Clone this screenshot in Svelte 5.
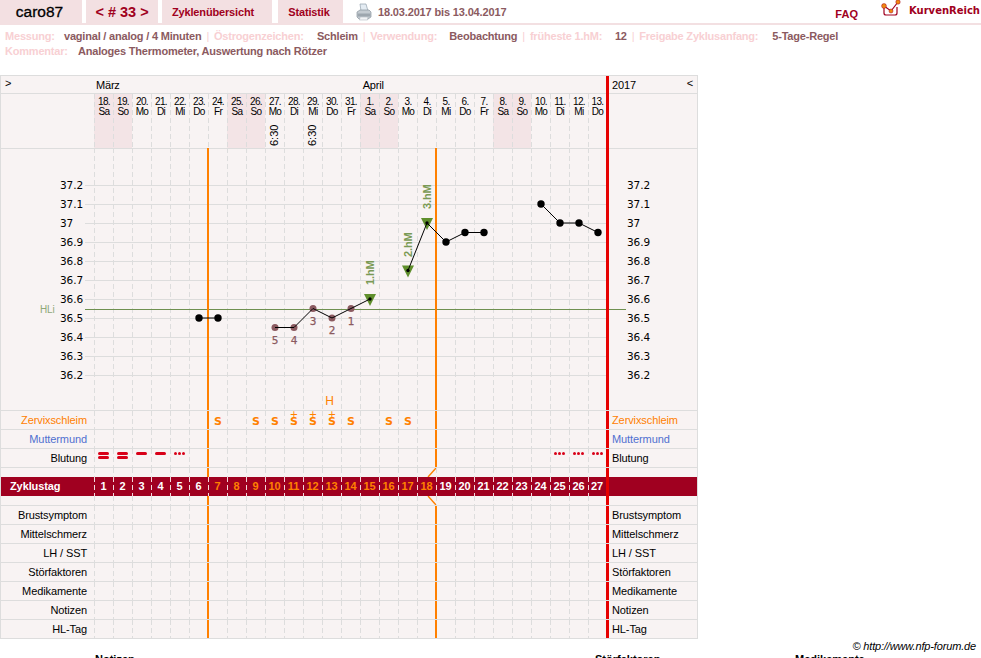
<script>
  const days = [
    ['18.', 'Sa'], ['19.', 'So'], ['20.', 'Mo'], ['21.', 'Di'], ['22.', 'Mi'], ['23.', 'Do'], ['24.', 'Fr'],
    ['25.', 'Sa'], ['26.', 'So'], ['27.', 'Mo'], ['28.', 'Di'], ['29.', 'Mi'], ['30.', 'Do'], ['31.', 'Fr'],
    ['1.', 'Sa'], ['2.', 'So'], ['3.', 'Mo'], ['4.', 'Di'], ['5.', 'Mi'], ['6.', 'Do'], ['7.', 'Fr'],
    ['8.', 'Sa'], ['9.', 'So'], ['10.', 'Mo'], ['11.', 'Di'], ['12.', 'Mi'], ['13.', 'Do']
  ];
  const idx = days.map((_, i) => i);
  const cx = i => 104 + 19 * i;
  const ty = t => 185 + (37.2 - t) * 190 - 148;
  const scale = [37.2, 37.1, 37, 36.9, 36.8, 36.7, 36.6, 36.5, 36.4, 36.3, 36.2];
  const times = { 9: '6:30', 11: '6:30' };

  // temperature runs, a gap in the data starts a new line
  const runs = [
    [[5, 36.5], [6, 36.5]],
    [[9, 36.45], [10, 36.45], [11, 36.55], [12, 36.5], [13, 36.55], [14, 36.6]],
    [[16, 36.75], [17, 37], [18, 36.9], [19, 36.95], [20, 36.95]],
    [[23, 37.1], [24, 37], [25, 37], [26, 36.95]]
  ];
  const low = { 9: '5', 10: '4', 11: '3', 12: '2', 13: '1' };
  const high = { 14: '1.hM', 16: '2.hM', 17: '3.hM' };
  const labelTop = { 14: 285, 16: 257, 17: 209 };

  const schleim = { 6: 'S', 8: 'S', 9: 'S', 10: 'Ŝ', 11: 'Ŝ', 12: 'Ŝ', 13: 'S', 15: 'S', 16: 'S' };
  const blutung = { 0: 'stark', 1: 'stark', 2: 'mittel', 3: 'mittel', 4: 'wenig', 24: 'wenig', 25: 'wenig', 26: 'wenig' };
  const lowerRows = ['Brustsymptom', 'Mittelschmerz', 'LH / SST', 'Störfaktoren', 'Medikamente', 'Notizen', 'HL-Tag'];

  const isWeekend = d => d[1] === 'Sa' || d[1] === 'So';
  const isOrange = i => i === 6 || i === 18;
</script>

<header class="top">
  <div class="tab name">caro87</div>
  <div class="tab num">&lt; # 33 &gt;</div>
  <div class="tab link wide">Zyklenübersicht</div>
  <div class="tab link stat">Statistik</div>
  <svg class="printer" width="16" height="18" viewBox="0 0 16 18">
    <path d="M4 1 L10 1 L12 8 L5 8 Z" fill="#e4ecf3" stroke="#93a2ae" stroke-width=".7" />
    <path d="M1 9 L4 7 L13 7 L15 9 L15 14 L12 16 L3 16 L1 14 Z" fill="#c4cbd1" stroke="#8b959d" stroke-width=".7" />
    <path d="M1.5 10.5 L14.5 10.5 L14.5 13.5 L1.5 13.5 Z" fill="#9da6ae" />
    <path d="M4 14 L12 14 L11.5 17 L3.5 17 Z" fill="#f2f4f6" stroke="#a5adb4" stroke-width=".5" />
  </svg>
  <div class="range">18.03.2017 bis 13.04.2017</div>
  <div class="faq">FAQ</div>
  <svg class="logo" width="20" height="18" viewBox="0 0 20 18">
    <path d="M3 6 L3 13 Q3 15 5 15 L14 15 Q16 15 16 13 L16 7" fill="#fff" stroke="#a00020" stroke-width="1.2" />
    <path d="M3 6 L10 11 L17 2" fill="none" stroke="#a00020" stroke-width="1.2" />
    <circle cx="3" cy="6" r="2.4" fill="#f08a10" stroke="#a00020" stroke-width=".5" />
    <circle cx="10" cy="11" r="2" fill="#f08a10" stroke="#a00020" stroke-width=".5" />
    <circle cx="17" cy="2" r="2.2" fill="#f08a10" stroke="#a00020" stroke-width=".5" />
  </svg>
  <div class="brand">KurvenReich</div>
</header>

<section class="meta">
  <div class="meta-line">
    <span class="key k1">Messung:</span><span class="val v1">vaginal / analog / 4 Minuten</span><span class="sep">|</span>
    <span class="key k2">Östrogenzeichen:</span><span class="val v2">Schleim</span><span class="sep">|</span>
    <span class="key k3">Verwendung:</span><span class="val v3">Beobachtung</span><span class="sep">|</span>
    <span class="key k4">früheste 1.hM:</span><span class="val v4">12</span><span class="sep">|</span>
    <span class="key k5">Freigabe Zyklusanfang:</span><span class="val">5-Tage-Regel</span>
  </div>
  <div class="meta-line">
    <span class="key k6">Kommentar:</span><span class="val">Analoges Thermometer, Auswertung nach Rötzer</span>
  </div>
</section>

<main class="chart">
  <div class="row months">
    <div class="toggle">&gt;</div>
    <div class="month-names">
      <span class="m1">März</span>
      <span class="m2">April</span>
    </div>
    <div class="redbar"></div>
    <div class="side year"><span>2017</span><span class="back">&lt;</span></div>
  </div>

  <div class="row dayrow">
    <div class="label"></div>
    {#each days as d, i}
      <div class="cell day" class:we={isWeekend(d)}>
        <div class="d">{d[0]}</div>
        <div class="d">{d[1]}</div>
        {#if times[i]}<div class="time">{times[i]}</div>{/if}
      </div>
    {/each}
    <div class="redbar"></div>
    <div class="side"></div>
  </div>

  <svg class="plot" width="696" height="262" viewBox="1 0 696 262">
    {#each idx as i}
      <line x1={94.5 + 19 * i} x2={94.5 + 19 * i} y1="0" y2="262" class="dash" />
    {/each}
    {#each scale as t}
      <line x1="85" x2="606" y1={ty(t) + 0.5} y2={ty(t) + 0.5} class="grid" />
      <text x="60" y={ty(t) + 4} class="scale">{t}</text>
      <text x="627" y={ty(t) + 4} class="scale">{t}</text>
    {/each}
    <line x1="85" x2="626" y1="161.5" y2="161.5" class="hl" />
    <text x="40" y="165" class="hli">HLi</text>
    <rect x="207" y="0" width="2" height="262" fill="#ff8000" />
    <rect x="435" y="0" width="2" height="262" fill="#ff8000" />
    <rect x="606" y="0" width="3" height="262" fill="#e60000" />

    {#each runs as run}
      {#each run as [i, t]}
        {#if high[i]}
          <path d={`M${cx(i) - 6} ${ty(t) - 5} L${cx(i) + 6} ${ty(t) - 5} L${cx(i)} ${ty(t) + 7} Z`} fill="#5f8f2c" />
          <circle cx={cx(i)} cy={ty(t)} r="1.7" fill="#000" />
          <text class="hm" transform={`translate(${cx(i) + 4} ${labelTop[i] - 148}) rotate(-90)`}>{high[i]}</text>
        {:else if low[i]}
          <circle cx={cx(i)} cy={ty(t)} r="3.5" fill="#8b5a60" />
          <text class="low" x={cx(i)} y={ty(t) + (i === 9 || i === 10 || i === 12 ? 16 : 16)}>{low[i]}</text>
        {:else}
          <circle cx={cx(i)} cy={ty(t)} r="3.7" fill="#000" />
        {/if}
      {/each}
      <polyline points={run.map(([i, t]) => `${cx(i)},${ty(t)}`).join(' ')} class="curve" />
    {/each}
    <text x="329.5" y="257" class="h">H</text>
  </svg>

  <div class="row line">
    <div class="label zervix">Zervixschleim</div>
    {#each idx as i}
      <div class="cell" class:ov={isOrange(i)}>
        {#if schleim[i]}
          <span class="s" class:plus={schleim[i] === 'Ŝ'}>S</span>
        {/if}
      </div>
    {/each}
    <div class="redbar"></div>
    <div class="side zervix">Zervixschleim</div>
  </div>

  <div class="row line">
    <div class="label mund">Muttermund</div>
    {#each idx as i}<div class="cell" class:ov={isOrange(i)}></div>{/each}
    <div class="redbar"></div>
    <div class="side mund">Muttermund</div>
  </div>

  <div class="row line">
    <div class="label">Blutung</div>
    {#each idx as i}
      <div class="cell" class:ov={isOrange(i)}>
        {#if blutung[i] === 'stark'}
          <span class="bleed"></span><span class="bleed second"></span>
        {:else if blutung[i] === 'mittel'}
          <span class="bleed"></span>
        {:else if blutung[i] === 'wenig'}
          <span class="spots"><i></i><i></i><i></i></span>
        {/if}
      </div>
    {/each}
    <div class="redbar"></div>
    <div class="side">Blutung</div>
  </div>

  <div class="row gap top-gap">
    <div class="label"></div>
    {#each idx as i}
      <div class="cell" class:ov={i === 6}>
        {#if i === 17}
          <svg class="kink" width="10" height="9" viewBox="0 0 10 9"><line x1="9" y1="0" x2="1" y2="9" /></svg>
        {/if}
      </div>
    {/each}
    <div class="redbar"></div>
    <div class="side"></div>
  </div>

  <div class="row band">
    <div class="label">Zyklustag</div>
    {#each idx as i}
      <div class="cell" class:hot={i >= 6 && i <= 17}>{i + 1}</div>
    {/each}
    <div class="redbar"></div>
    <div class="side"></div>
  </div>

  <div class="row gap bottom-gap">
    <div class="label"></div>
    {#each idx as i}
      <div class="cell" class:ov={i === 6}>
        {#if i === 17}
          <svg class="kink" width="10" height="9" viewBox="0 0 10 9"><line x1="1" y1="0" x2="9" y2="9" /></svg>
        {/if}
      </div>
    {/each}
    <div class="redbar"></div>
    <div class="side"></div>
  </div>

  {#each lowerRows as name}
    <div class="row line">
      <div class="label">{name}</div>
      {#each idx as i}<div class="cell" class:ov={isOrange(i)}></div>{/each}
      <div class="redbar"></div>
      <div class="side">{name}</div>
    </div>
  {/each}
</main>

<div class="copy">© http://www.nfp-forum.de</div>
<div class="notes">
  <span class="n1">Notizen</span>
  <span class="n2">Störfaktoren</span>
  <span class="n3">Medikamente</span>
</div>

<style>
  :global(html),
  :global(body) {
    height: 658px;
    overflow: hidden;
  }
  :global(body) {
    font-family: "Liberation Sans", Arial, sans-serif;
    font-size: 11px;
    background: #fff;
  }

  /* top bar */
  .top {
    display: flex;
    align-items: center;
    height: 23px;
    border-bottom: 2px solid #f3e0e2;
  }
  .tab {
    height: 23px;
    line-height: 24px;
    background: #f3e0e2;
    text-align: center;
    color: #a00020;
    box-sizing: border-box;
  }
  .name {
    width: 82px;
    padding-right: 3px;
    color: #000;
    font-size: 15.5px;
    -webkit-text-stroke: 0.3px #000;
  }
  .num {
    width: 72px;
    margin-left: 4px;
    font-size: 14.5px;
    font-weight: bold;
  }
  .link {
    margin-left: 4px;
    font-weight: bold;
    letter-spacing: -0.15px;
  }
  .wide {
    width: 110px;
    padding-right: 8px;
  }
  .stat {
    width: 65px;
    margin-left: 6px;
    padding-right: 3px;
  }
  .printer {
    margin-left: 13px;
  }
  .range {
    margin-left: 6px;
    color: #8b5a60;
    font-weight: bold;
    letter-spacing: -0.15px;
  }
  .faq {
    margin-left: auto;
    margin-top: 5px;
    color: #a00020;
    font-weight: bold;
  }
  .logo {
    margin: -6px 0 0 23px;
  }
  .brand {
    margin: -3px 1px 0 8px;
    color: #a00020;
    font-family: "DejaVu Sans", sans-serif;
    font-size: 10px;
    font-weight: bold;
  }

  /* meta lines */
  .meta {
    height: 50px;
    padding: 3px 0 0 5px;
    box-sizing: border-box;
    font-weight: bold;
    letter-spacing: -0.2px;
  }
  .meta-line {
    height: 15px;
    line-height: 16px;
    white-space: nowrap;
  }
  .key {
    color: #f8d0d3;
    display: inline-block;
  }
  .val {
    color: #8b5a60;
  }
  .sep {
    color: #f8d0d3;
    margin: 0 2px 0 5px;
    font-weight: normal;
  }
  .k1 { width: 59px; }
  .k2 { width: 103px; }
  .k3 { width: 79px; }
  .k4 { width: 85px; }
  .k5 { width: 133px; }
  .k6 { width: 73px; }

  /* chart */
  .chart {
    width: 698px;
    box-sizing: border-box;
    border: solid #ddd;
    border-width: 1px 1px 0 1px;
    background: #f8f3f3;
    color: #000;
    letter-spacing: -0.1px;
  }
  .row {
    display: grid;
    grid-template-columns: 93px repeat(26, 19px) 18px 3px 88px;
    height: 19px;
    box-sizing: border-box;
    border-bottom: 1px solid #ddd;
  }
  .months {
    height: 18px;
    grid-template-columns: 93px 512px 3px 88px;
  }
  .toggle {
    padding-left: 4px;
    line-height: 14px;
  }
  .month-names {
    display: flex;
    line-height: 19px;
    padding-left: 2px;
    letter-spacing: -0.2px;
  }
  .m2 {
    margin-left: 243px;
  }
  .year {
    display: flex;
    justify-content: space-between;
    line-height: 19px;
  }
  .back {
    line-height: 14px;
    padding-right: 4px;
  }
  .dayrow {
    height: 55px;
  }
  .day {
    padding: 3px 0 0 1px;
    box-sizing: border-box;
    text-align: center;
    font-size: 10px;
    line-height: 10px;
    letter-spacing: -0.6px;
  }
  .we {
    background-color: #f3e4e6;
  }
  .time {
    position: absolute;
    left: 0;
    top: 30px;
    width: 18px;
    height: 22px;
    line-height: 18px;
    font-size: 11px;
    letter-spacing: 0;
    writing-mode: vertical-rl;
    transform: rotate(180deg);
    text-align: center;
  }
  .cell {
    position: relative;
    background-image: repeating-linear-gradient(to bottom, #ddd 0 5px, transparent 5px 8px);
    background-size: 1px 100%;
    background-repeat: no-repeat;
  }
  .ov::before {
    content: "";
    position: absolute;
    left: -1px;
    top: 0;
    bottom: 0;
    width: 2px;
    background: #ff8000;
  }
  .redbar {
    background: #e60000;
  }
  .side {
    padding-left: 3px;
    line-height: 18px;
  }
  .label {
    padding-right: 7px;
    text-align: right;
    line-height: 18px;
  }
  .zervix {
    color: #ff8000;
  }
  .mund {
    color: #5070d0;
  }

  .plot {
    display: block;
    border-bottom: 1px solid #ddd;
    height: 262px;
    margin-top: -1px;
  }
  .dash {
    stroke: #ddd;
    stroke-dasharray: 5 3;
  }
  .grid {
    stroke: #ddd;
  }
  .hl {
    stroke: #6f9050;
  }
  .scale {
    font-family: "DejaVu Sans", sans-serif;
    font-size: 10.5px;
    fill: #000;
  }
  .hli {
    font-size: 10px;
    fill: #8fa878;
  }
  .curve {
    fill: none;
    stroke: #000;
    stroke-width: 1;
  }
  .hm {
    font-size: 11px;
    font-weight: bold;
    fill: #7a9a55;
  }
  .low {
    font-family: "DejaVu Sans", sans-serif;
    font-size: 10.5px;
    fill: #8b5a60;
    stroke: #8b5a60;
    stroke-width: 0.25;
    text-anchor: middle;
  }
  .h {
    font-size: 12px;
    fill: #ff8000;
    text-anchor: middle;
  }

  .s {
    position: absolute;
    left: 1px;
    right: 0;
    top: 5px;
    text-align: center;
    font-family: "DejaVu Sans", sans-serif;
    font-size: 11px;
    font-weight: bold;
    line-height: 12px;
    color: #ff8000;
  }
  .plus::before {
    content: "+";
    position: absolute;
    left: 0;
    right: 0;
    top: -7px;
    font-size: 10px;
    font-weight: normal;
  }
  .bleed {
    position: absolute;
    left: 4px;
    top: 3px;
    width: 11px;
    height: 3px;
    border-radius: 2px;
    background: #d80018;
  }
  .bleed.second {
    top: 7px;
  }
  .spots {
    position: absolute;
    left: 4px;
    top: 3px;
    display: flex;
    gap: 1px;
  }
  .spots i {
    width: 3px;
    height: 3px;
    border-radius: 2px;
    background: #d80018;
  }

  .top-gap {
    height: 9px;
    border-bottom: 0;
  }
  .bottom-gap {
    height: 10px;
  }
  .kink {
    position: absolute;
    right: -1px;
    top: 0;
  }
  .kink line {
    stroke: #ff8000;
    stroke-width: 1.4;
  }

  .band {
    background: #a00020;
    color: #fff;
    border-bottom: 0;
    font-weight: bold;
    line-height: 19px;
  }
  .band .label {
    padding: 0 0 0 9px;
    text-align: left;
    line-height: 19px;
  }
  .band .cell {
    text-align: center;
    background-image: repeating-linear-gradient(to bottom, #f3d8dc 0 5px, transparent 5px 8px);
  }
  .band .hot {
    color: #ff8000;
  }

  .copy {
    width: 976px;
    margin-top: 1px;
    text-align: right;
    font-style: italic;
    line-height: 13px;
    letter-spacing: -0.15px;
  }
  .notes {
    display: flex;
    font-weight: bold;
    padding-left: 95px;
  }
  .n1 {
    width: 500px;
  }
  .n2 {
    width: 200px;
  }
</style>
